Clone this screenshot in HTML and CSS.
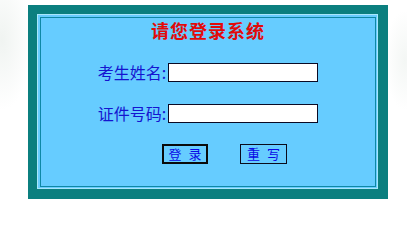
FILE: index.html
```html
<!DOCTYPE html>
<html lang="zh">
<head>
<meta charset="utf-8">
<title>请您登录系统</title>
<link rel="stylesheet" href="styles.css">
</head>
<body>
<div class="page">
  <div class="frame">
    <div class="panel">
      <div class="inner">
        <h1 class="title">请您登录系统</h1>
        <form class="form">
          <div class="row">
            <label class="label" for="name">考生姓名:</label>
            <input class="field" id="name" type="text">
          </div>
          <div class="row">
            <label class="label" for="idno">证件号码:</label>
            <input class="field" id="idno" type="text">
          </div>
          <div class="actions">
            <button class="btn btn-primary" type="button">登 录</button>
            <button class="btn btn-reset" type="reset">重 写</button>
          </div>
        </form>
      </div>
    </div>
  </div>
</div>
</body>
</html>
```
FILE: styles.css
```css
html, body {
  margin: 0;
  height: 100%;
}
body {
  font-family: "Noto Sans CJK SC", "Liberation Sans", sans-serif;
  background:
    radial-gradient(ellipse 30px 70px at 2px 40px, rgba(230, 236, 232, 0.6), rgba(255,255,255,0) 100%),
    radial-gradient(ellipse 20px 50px at 405px 60px, rgba(232, 238, 234, 0.5), rgba(255,255,255,0) 100%),
    #ffffff;
}
.page {
  padding: 5px 0 0 28px;
}
.frame {
  width: 360px;
  height: 194px;
  box-sizing: border-box;
  background: #0b7f7f;
  padding: 9px 10px 10px 9px;
}
.panel {
  height: 100%;
  box-sizing: border-box;
  border: 1px solid #a8e6fb;
  padding: 2px 1px 1px 2px;
  background: #66ccff;
}
.inner {
  height: 100%;
  box-sizing: border-box;
  border: 1px solid #0e88a6;
  display: flex;
  flex-direction: column;
}
.title {
  margin: 0;
  font-size: 18px;
  line-height: 24px;
  font-weight: bold;
  color: #e20a0a;
  text-align: center;
  letter-spacing: 1px;
}
.form {
  margin: 0;
  padding-top: 21px;
  display: flex;
  flex-direction: column;
  gap: 22px;
}
.row {
  display: flex;
  justify-content: center;
  align-items: center;
  height: 19px;
}
.label {
  font-size: 16px;
  line-height: 19px;
  color: #1515d0;
  margin-right: 2px;
}
.field {
  width: 150px;
  height: 19px;
  box-sizing: border-box;
  border: 1px solid #0a0a24;
  padding: 0 2px;
  margin: 0;
  background: #ffffff;
  font-size: 12px;
  outline: none;
}
.actions {
  display: flex;
  align-items: center;
  gap: 32px;
  padding-left: 121px;
  margin-top: -1px;
}
.btn {
  height: 20px;
  box-sizing: border-box;
  padding: 0;
  margin: 0;
  background: #66ccff;
  color: #0a0ae6;
  font-family: "Noto Sans CJK SC", sans-serif;
  font-size: 13px;
  line-height: 16px;
  word-spacing: 4px;
  border: 1px solid #0a0a1a;
}
.btn-primary {
  width: 46px;
  border: 2px solid #0a0a0a;
}
.btn-reset {
  width: 47px;
}
```
